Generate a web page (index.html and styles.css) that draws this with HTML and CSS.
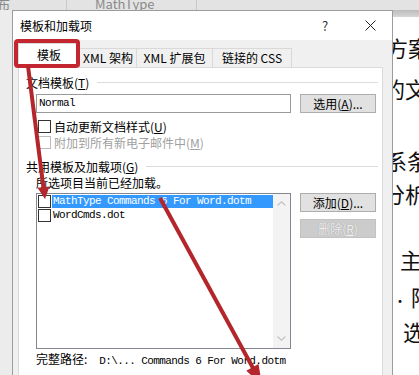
FILE: index.html
```html
<!DOCTYPE html>
<html lang="zh-CN">
<head>
  <meta charset="UTF-8">
  <meta name="viewport" content="width=device-width, initial-scale=1.0">
  <title>模板和加载项</title>
  <link rel="stylesheet" href="styles.css">
</head>
<body>
  <div class="screen">
    <!-- Faixa da faixa de opções do Word, cortada no topo -->
    <div class="ribbon">
      <div class="ribbon-tab first">布</div>
      <div class="ribbon-tab math">MathType</div>
    </div>

    <div class="workspace">
      <div class="side"></div>
      <div class="doc">
        <div class="doc-band"></div>
        <div class="doc-line l1">解决方案</div>
        <div class="doc-line l2">目的文</div>
        <div class="doc-line l3">关系条</div>
        <div class="doc-line l4">分析</div>
        <div class="doc-line l5">主</div>
        <div class="doc-line l6"><span class="dot">·</span>降</div>
        <div class="doc-line l7">选</div>
      </div>
    </div>

    <!-- Janela de diálogo -->
    <div class="dialog">
      <div class="titlebar">
        <span class="title">模板和加载项</span>
        <span class="help">?</span>
        <svg class="close" width="11" height="11" viewBox="0 0 11 11">
          <path d="M0.5 0.5 L10.5 10.5 M10.5 0.5 L0.5 10.5" stroke="#222" stroke-width="1" fill="none"/>
        </svg>
      </div>

      <div class="tabs">
        <div class="tab tab-active" style="width: 62px;">模板</div>
        <div class="tab" style="width: 57px;">XML 架构</div>
        <div class="tab" style="width: 76px;">XML 扩展包</div>
        <div class="tab" style="width: 79px;">链接的 CSS</div>
      </div>

      <div class="panel">
        <div class="group-title">文档模板(<u>T</u>)</div>

        <div class="row field-row">
          <div class="text-input mono">Normal</div>
          <div class="btn"><span>选用(<u>A</u>)...</span></div>
        </div>

        <div class="check-row first-check">
          <span class="box"></span>自动更新文档样式(<u>U</u>)
        </div>
        <div class="check-row disabled">
          <span class="box"></span>附加到所有新电子邮件中(<u>M</u>)
        </div>

        <div class="group-title second">共用模板及加载项(<u>G</u>)</div>
        <div class="note">所选项目当前已经加载。</div>

        <div class="row list-row">
          <div class="list">
            <div class="list-items">
              <div class="item item-selected">
                <span class="box"></span>
                <span class="item-name mono">MathType Commands 6 For Word.dotm</span>
              </div>
              <div class="item">
                <span class="box"></span>
                <span class="item-name mono">WordCmds.dot</span>
              </div>
            </div>
            <div class="scrollbar">
              <svg width="9" height="5" viewBox="0 0 9 5"><path d="M0.5 4.5 L4.5 0.8 L8.5 4.5" stroke="#c2c2c2" stroke-width="1.2" fill="none"/></svg>
              <svg width="9" height="5" viewBox="0 0 9 5"><path d="M0.5 0.5 L4.5 4.2 L8.5 0.5" stroke="#c2c2c2" stroke-width="1.2" fill="none"/></svg>
            </div>
          </div>
          <div class="side-buttons">
            <div class="btn"><span>添加(<u>D</u>)...</span></div>
            <div class="btn btn-disabled"><span>删除(<u>R</u>)</span></div>
          </div>
        </div>

        <div class="path">完整路径:<span class="mono">  D:\... Commands 6 For Word.dotm</span></div>
      </div>
    </div>

    <!-- Anotações em vermelho por cima da captura -->
    <svg class="marks" width="419" height="375" viewBox="0 0 419 375">
      <rect x="16" y="41" width="62" height="25" rx="2" fill="none" stroke="#c3262e" stroke-width="4"/>
      <line x1="28" y1="66" x2="43.5" y2="188" stroke="#b3262b" stroke-width="4"/>
      <polygon points="45,199 37.5,187.8 49.5,186.4" fill="#b3262b"/>
      <line x1="160" y1="198" x2="253" y2="368" stroke="#b3262b" stroke-width="4"/>
      <polygon points="262,385 246.3,370.8 258.5,364" fill="#b3262b"/>
    </svg>
  </div>
</body>
</html>
```

FILE: styles.css
```css
/* Base */
* {
  margin: 0;
  padding: 0;
  box-sizing: border-box;
}

body {
  width: 419px;
  height: 375px;
  overflow: hidden;
  background-color: #fff;
  color: #000;
  font-family: "Noto Sans CJK SC", "Noto Sans", sans-serif;
  font-size: 12px;
}

.screen {
  position: relative;
  width: 419px;
  height: 375px;
  overflow: hidden;
}

.mono {
  font-family: "Liberation Mono", "Noto Sans CJK SC", monospace;
  font-size: 11px;
  letter-spacing: -0.6px;
  white-space: pre;
}

u {
  text-decoration: underline;
  text-underline-offset: 1px;
}

/* Faixa superior */
.ribbon {
  display: flex;
  justify-content: flex-start;
  height: 10px;
  overflow: hidden;
  background-color: #e3e3e3;
  color: #8a8a8a;
  font-size: 13px;
  line-height: 8px;
}

.ribbon-tab {
  flex: none;
  height: 10px;
  border-right: 1px solid #c9c9c9;
  white-space: nowrap;
}

.ribbon-tab.first {
  width: 67px;
  text-indent: -3px;
}

.ribbon-tab.math {
  width: 130px;
  padding-left: 28px;
}

/* Documento ao fundo */
.workspace {
  display: flex;
  height: 365px;
}

.side {
  flex: none;
  width: 12px;
  background-color: #ececec;
}

.doc {
  flex: 1;
  min-width: 0;
  overflow: hidden;
  background-color: #fff;
}

.doc-band {
  height: 7px;
  background: linear-gradient(#bcbcbc, #d6d6d6);
}

.doc-line {
  height: 22px;
  font-size: 22px;
  line-height: 22px;
  white-space: nowrap;
  color: #111;
}

.l1 { margin-top: 19px; padding-left: 330px; }
.l2 { margin-top: 19px; padding-left: 349px; }
.l3 { margin-top: 50px; padding-left: 351px; }
.l4 { margin-top: 11px; padding-left: 371px; }
.l5 { margin-top: 44px; padding-left: 388px; }
.l6 { margin-top: 15px; padding-left: 381px; }
.l7 { margin-top: 13px; padding-left: 391px; }

.dot {
  font-size: 14px;
  margin-right: 4px;
}

/* Diálogo */
.dialog {
  position: absolute;
  left: 12px;
  top: 10px;
  width: 381px;
  height: 372px;
  background-color: #f0f0f0;
  border: 1px solid #9c9c9c;
  border-bottom: 0;
}

.titlebar {
  display: flex;
  align-items: center;
  height: 29px;
  padding-left: 7px;
  background-color: #fff;
}

.title {
  flex: 1;
}

.help {
  width: 8px;
  margin-right: 36px;
  text-align: center;
  font-size: 13px;
  color: #333;
}

.close {
  flex: none;
  margin-right: 16px;
}

/* Abas */
.tabs {
  display: flex;
  align-items: flex-end;
  height: 27px;
  padding-left: 5px;
}

.tab {
  display: flex;
  align-items: center;
  justify-content: center;
  height: 19px;
  background-color: #f0f0f0;
  border: 1px solid #d9d9d9;
  border-bottom: 0;
  border-left: 0;
  white-space: nowrap;
  line-height: 1;
}

.tab-active {
  position: relative;
  z-index: 1;
  height: 25px;
  margin-bottom: -1px;
  background-color: #fff;
  border-left: 1px solid #d9d9d9;
  padding-bottom: 2px;
}

.panel {
  width: 365px;
  height: 310px;
  margin-left: 5px;
  padding: 0 4px 0 7px;
  background-color: #fff;
  border: 1px solid #d9d9d9;
  border-bottom: 0;
}

.group-title {
  display: flex;
  align-items: center;
  height: 16px;
  margin-top: 6px;
  white-space: nowrap;
}

.group-title::after {
  content: "";
  flex: 1;
  height: 1px;
  margin-left: 8px;
  background-color: #dcdcdc;
}

.group-title.second {
  margin-top: 9px;
}

.row {
  display: flex;
  padding-left: 10px;
  gap: 9px;
}

.field-row {
  margin-top: 4px;
}

.text-input {
  width: 255px;
  height: 19px;
  padding-left: 2px;
  border: 1px solid #9a9a9a;
  line-height: 17px;
}

/* Botões */
.btn {
  width: 76px;
  height: 19px;
  background-color: #e1e1e1;
  border: 1px solid #adadad;
  text-align: center;
  line-height: 17px;
  white-space: nowrap;
}

.btn-disabled {
  background-color: #cccccc;
  border-color: #c2c2c2;
  color: #f2f2f2;
  text-shadow: 0 0 1px #8f8f8f;
}

/* Caixas de seleção */
.check-row {
  display: flex;
  align-items: center;
  height: 14px;
  margin-top: 2px;
  padding-left: 12px;
  white-space: nowrap;
}

.check-row.first-check {
  margin-top: 6px;
}

.box {
  flex: none;
  width: 13px;
  height: 13px;
  margin-right: 3px;
  background-color: #fff;
  border: 1px solid #333;
}

.check-row.disabled {
  color: #a0a0a0;
}

.check-row.disabled .box {
  border-color: #bcbcbc;
}

.note {
  height: 16px;
  margin-top: 1px;
  padding-left: 10px;
  line-height: 16px;
}

/* Lista de modelos */
.list-row {
  margin-top: 2px;
  align-items: flex-start;
}

.list {
  display: flex;
  width: 255px;
  height: 156px;
  background-color: #fff;
  border: 1px solid #828790;
}

.list-items {
  flex: 1;
  padding-left: 1px;
}

.item {
  display: flex;
  align-items: center;
  height: 14px;
}

.item .box {
  margin-right: 1px;
}

.item-name {
  height: 13px;
  padding-left: 1px;
  line-height: 13px;
}

.item-selected .item-name {
  flex: 1;
  background-color: #3399ff;
  color: #fff;
}

.scrollbar {
  display: flex;
  flex-direction: column;
  justify-content: space-between;
  align-items: center;
  width: 17px;
  padding: 7px 0 7px;
  background-color: #f3f3f3;
}

.side-buttons {
  display: flex;
  flex-direction: column;
  gap: 7px;
}

.path {
  height: 14px;
  margin-top: 3px;
  padding-left: 10px;
  line-height: 14px;
  white-space: nowrap;
}

/* Anotações */
.marks {
  position: absolute;
  left: 0;
  top: 0;
  z-index: 5;
}
```
